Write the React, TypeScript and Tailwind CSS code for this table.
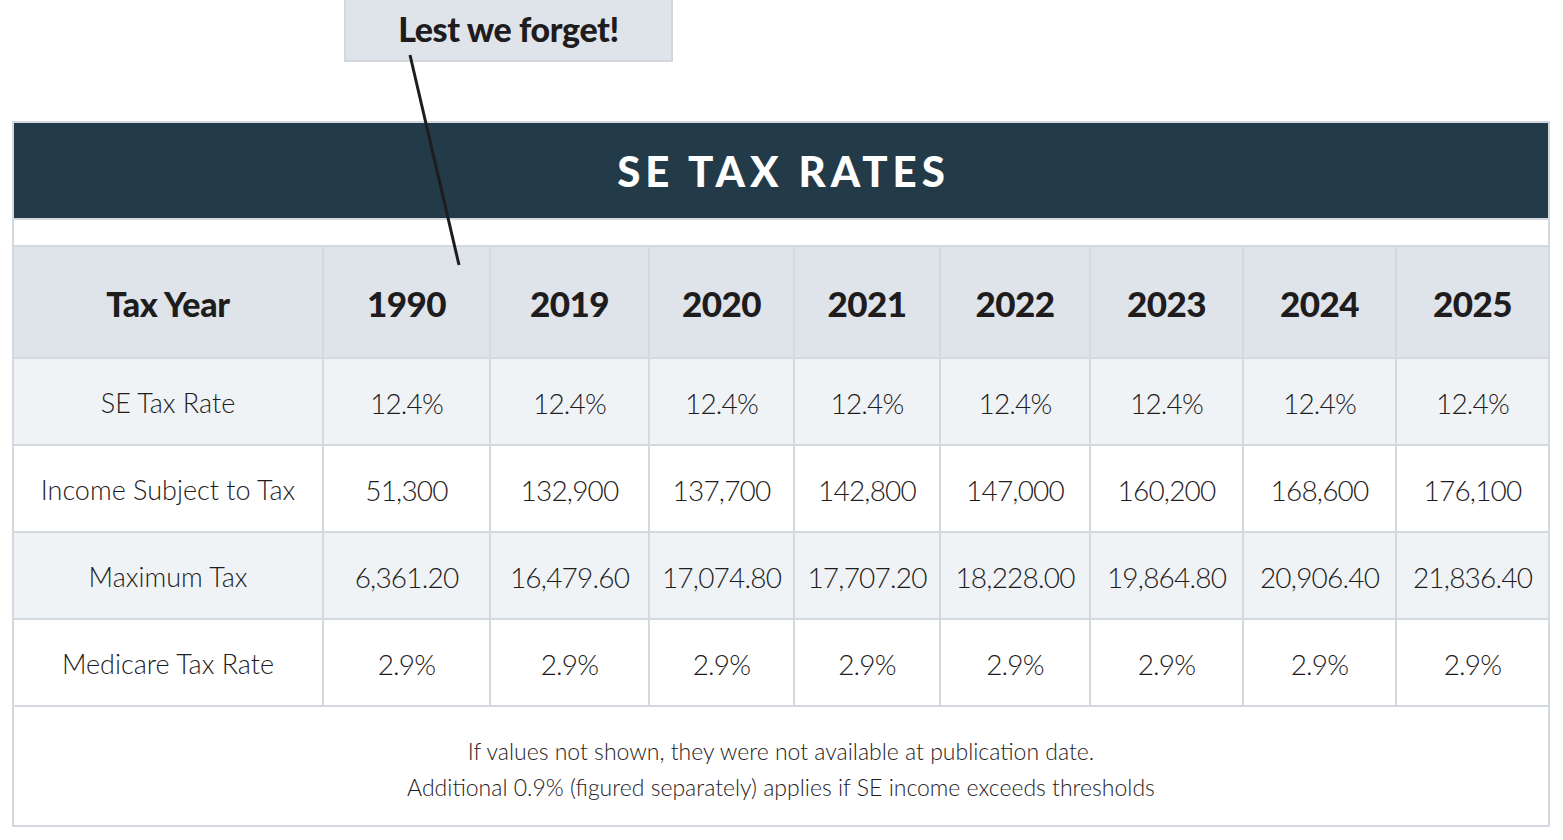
import React from "react";

const years = ["1990", "2019", "2020", "2021", "2022", "2023", "2024", "2025"];
const rows: { label: string; values: string[]; alt: boolean }[] = [
  { label: "SE Tax Rate", values: Array(8).fill("12.4%"), alt: true },
  {
    label: "Income Subject to Tax",
    values: ["51,300", "132,900", "137,700", "142,800", "147,000", "160,200", "168,600", "176,100"],
    alt: false,
  },
  {
    label: "Maximum Tax",
    values: ["6,361.20", "16,479.60", "17,074.80", "17,707.20", "18,228.00", "19,864.80", "20,906.40", "21,836.40"],
    alt: true,
  },
  { label: "Medicare Tax Rate", values: Array(8).fill("2.9%"), alt: false },
];

const cols = "grid grid-cols-[308px_165px_157px_143px_144px_148px_151px_151px_151px] gap-[2px]";

export default function App() {
  return (
    <div className="relative w-[1563px] h-[840px] bg-white text-[#1f1c1d]" style={{ fontFamily: "Lato, 'Noto Sans', sans-serif" }}>
      <div className="pl-[344px] pt-0">
        <div className="w-[329px] h-[62px] bg-[#dfe4ea] border-2 border-t-0 border-[#d2d8de] flex items-center justify-center">
          <span className="text-[34px] font-black tracking-[-0.4px] leading-none pb-[2px]">Lest we forget!</span>
        </div>
      </div>
      <div className="ml-[12px] mt-[59px] w-[1538px] bg-[#d3d9de] p-[2px] flex flex-col gap-[2px]">
        <div className="h-[95px] bg-[#233a49] flex items-center justify-center">
          <span className="text-white text-[42px] font-black tracking-[5px] leading-none pl-[5px]">SE TAX RATES</span>
        </div>
        <div className="h-[25px] bg-white" />
        <div className={cols}>
          <div className="h-[110px] bg-[#dee4ea] flex items-center justify-center text-[34px] font-black tracking-[-0.3px] pt-[3px]">Tax Year</div>
          {years.map((y) => (
            <div key={y} className="h-[110px] bg-[#dee4ea] flex items-center justify-center text-[35px] font-black tracking-[-0.5px] pt-[3px]">
              {y}
            </div>
          ))}
        </div>
        {rows.map((r) => (
          <div key={r.label} className={cols}>
            <div className={`h-[85px] flex items-center justify-center text-[27px] font-light pt-[4px] ${r.alt ? "bg-[#eff3f6]" : "bg-white"}`}>
              {r.label}
            </div>
            {r.values.map((v, i) => (
              <div
                key={i}
                className={`h-[85px] flex items-center justify-center text-[28px] font-light tracking-[-0.8px] pt-[2px] ${r.alt ? "bg-[#eff3f6]" : "bg-white"}`}
              >
                {v}
              </div>
            ))}
          </div>
        ))}
        <div className="h-[118px] bg-white flex flex-col items-center justify-center text-[23px] font-light leading-[36px] pt-[6px]">
          <div>If values not shown, they were not available at publication date.</div>
          <div>Additional 0.9% (figured separately) applies if SE income exceeds thresholds</div>
        </div>
      </div>
      <svg className="absolute left-0 top-0 pointer-events-none" width="1563" height="840">
        <line x1="410" y1="55" x2="459" y2="265" stroke="#1f1c1d" strokeWidth="3" />
      </svg>
    </div>
  );
}
